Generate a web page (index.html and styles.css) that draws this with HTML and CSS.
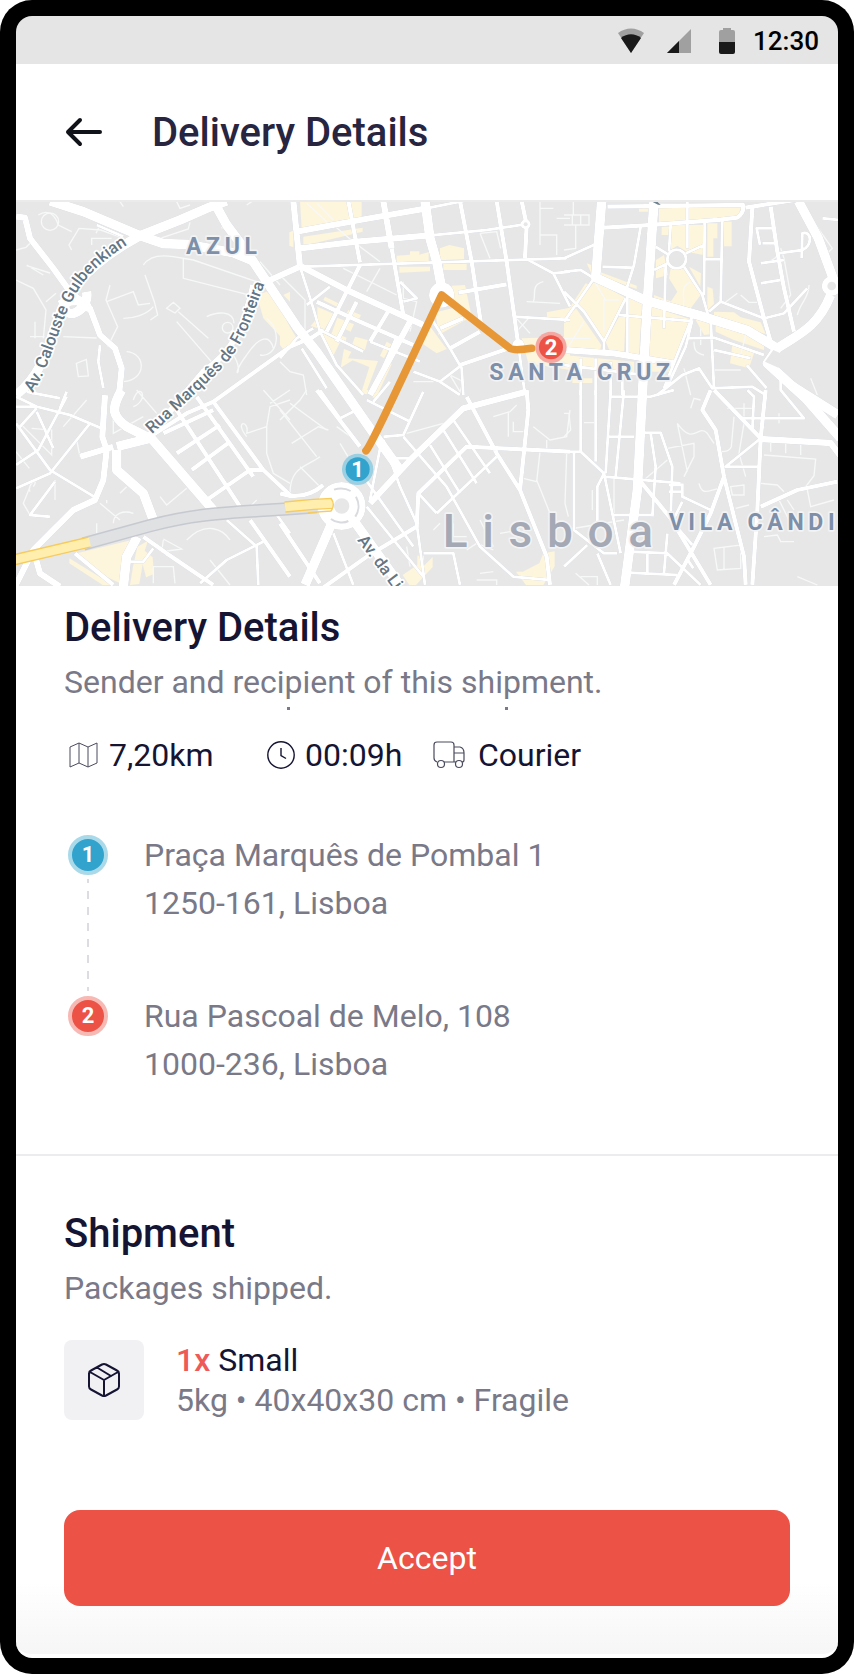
FILE: index.html
```html
<!DOCTYPE html>
<html lang="en">

<head>
  <meta charset="utf-8">
  <meta name="viewport" content="width=device-width">
  <title>Delivery Details</title>
  <link rel="stylesheet" href="styles.css">
</head>

<body>
  <div class="device">
    <div class="status">
      <svg class="wifi" viewBox="0 0 28 26">
        <path fill="#a0a0a0" d="M1 5C9-1 19-1 27 5L14 25z" />
        <path fill="#191919" d="M4 10C10 5 18 5 24 10L14 25z" />
      </svg>
      <svg class="signal" viewBox="0 0 24 24">
        <path fill="#a0a0a0" d="M24 0v24H0z" />
        <path fill="#191919" d="M12 12v12H0z" />
      </svg>
      <svg class="battery" viewBox="0 0 16 26">
        <path fill="#a0a0a0" d="M4 0h8v2h2q2 0 2 2v10H0V4q0-2 2-2h2z" />
        <path fill="#191919" d="M0 14h16v10q0 2-2 2H2q-2 0-2-2z" />
      </svg>
      <span>12:30</span>
    </div>

    <header>
      <button class="back" type="button" aria-label="Back">
        <svg viewBox="0 0 40 32" fill="none" stroke="#11131a" stroke-width="4" stroke-linecap="round" stroke-linejoin="round">
          <path d="M36 15H4M16 3L4 15l12 12" />
        </svg>
      </button>
      <h1>Delivery Details</h1>
    </header>

    <main>
      <svg class="map" viewBox="48 21 2466 1152" preserveAspectRatio="xMidYMid slice" role="img" aria-label="Route map">
        <rect class="land" x="0" y="0" width="2600" height="1200" />

        <!-- built-up areas -->
        <g class="area">
          <path d="M800 290l35 30 35 80v55l-80-85-20-70zM850 300l20-10v30z" />
          <g transform="translate(840 0)">
            <path d="M60 18h185v52L65 102zM70 125l178-27v12L70 152zM28 112l12-5v50l-12-5zM350 182l40-3v-10h28v10l28-8v28l-96 6zM358 215h92v14l-92 4zM480 160l28-10 44 10v32l-72 4zM490 207h70v18h-70zM515 272l40-2 20 95-100 55-8-68 50-12zM440 380l60 82-30 13-60-40z" />
            <path d="M112 335l50 22-30 48-40-12 20-25zM135 305l40 20-5 10-40-20zM172 368l50 20-10 22-22-10-10 20 20 8-5 14-42-22zM122 412l58 30-20 40zM205 345l38 15-10 20-38-15zM192 462l22 8-10 20 90 8-34 90-14-2 22-70-50-20-36 22zM225 425l38 10-8 30-38-18zM320 440l14 8-22 42-12-8zM315 500l20 8-36 78-20-4zM0 345l50 85-35 40-15-20zM800 352l70-14v37l-68-5zM725 430l145-5v100l-125-20z" />
          </g>
          <g transform="translate(1692 0)">
            <path d="M285 25h250l-15 45-150 10h-85zM293 95h22v25h-22zM320 90h100l-2 90-50-10-28-18-20 12zM430 85h30v45h-12v55h-18zM480 80h23v74h-23zM225 35h30v15h-30zM300 180l12 60-36 10v-55zM68 205l14 5v25zM110 232l108 40v10l-108-38zM65 265l16 6L10 376l-10-12zM92 258l92 50-64 132-80-110zM36 340l76 110-5 20L0 460v-75zM190 310h45l-10 170h-35zM165 365h20l-5 110h-40l-15-35zM265 335l120 40-86 130-54-10zM320 220h40l50 80-30 40-60-20 20-30-25-40zM375 215l36 20-2 40zM430 275l16 6 4 45-20 20zM270 300l80 30-5 15-75-20zM330 390l50-10-45 120-30 10zM395 375l45 5-2 38-18 2zM450 350l60 2 20 15 60 15 15 35-155-45zM455 385l145 50v30l-90-30-55-25zM505 450l55 10 10 15-15 45-57-15zM0 480l210 20v40L0 515zM25 550h60v14H25zM250 500h70v30h-70z" />
          </g>
          <g transform="translate(0 585)">
            <path d="M230 490l165-40-35 130-40-20zM412 470l32-18-10 30 24 20 4 50-24 10-10-40-10 60-28 3 10-60zM208 505l130 80h-30l-100-65z" />
          </g>
          <g transform="translate(840 585)">
            <path d="M245 0h20v12h-20zM285 0h14l-10 26-12-4zM368 555l44-30v-28h20v30l26-26v30l-50 54h-20zM708 545h20l50-25 12-30 34-6v45l-34 56h-52z" />
          </g>
        </g>

        <!-- footpaths -->
        <g class="path">
          <path d="M435 240l28 80 10 40-22 15M430 210c20-30 60-30 90-25l60 10 190 65M550 190v60l190 48M500 340l20-18 20 18-15 14zM535 350l90 80M530 380l130 150M480 130l85-28 5-20M330 270l-12 45 35 80-30 60M300 90l-12 25M215 165l-8-15 30-50 65 5 70 25M275 150v-20h60M48 165l30-8 20-20M80 212l70 22M48 255l52 25 38 65-8 85M90 425h44M105 380v50M130 240l-50-30M138 320l30-25M620 365c30-15 80-20 82 20M370 370c30 0 70-10 90-35M320 320l80-30 15 40 35-5M235 545l-6-40 30-12 6 50zM380 470c60 5 60 85-10 90M190 425l100 4M360 20l10 15M530 20l10 20 30-10M740 30l15-10M665 100l12-20M115 60c30-20 50 0 60 30l40 20M780 200l60 70M700 480c40 60-20 80 40 0 40-60 70-60 80-20M800 370c50 40 30 120-20 110" />
          <circle cx="683" cy="398" r="16" />
          <circle cx="150" cy="80" r="26" />
          <g transform="translate(840 0)">
            <path d="M80 25l65 60M110 25l50 50M160 90l60 50 80 60M190 220l160 80M300 220l-40 70M600 115l30 75M600 115l50-5 12 50M780 20v130M780 40h40M780 120h50v60M740 320l100 5M790 260c-40 10-20 40-30 60M5 245l70 70v90M0 500l30 30 40 10 10 60M830 70h40M705 365l45 50M750 365l-45 50M510 540l40 20-10 30zM370 260v50l40 10-20 90M400 560h60" />
          </g>
          <g transform="translate(1692 0)">
            <path d="M0 60h75v30H0M25 60v30M50 60v30M28 20v40M35 90v70L0 165M95 265l30 50h40M120 310v100M60 380L10 460M0 430h80M380 260c-40 20-10 50-25 80M520 295l-40 30M530 300l25 22h25M650 160l10 30 20 110-30 40M700 360c10-40 35-50 35-90M755 90l50 70-15 15M410 400v50M390 440c0 30 10 35 30 40M545 420l-15 60M450 525h80M740 550l20 50M360 520l20 80M650 170c-20 30-50 40-60 30" />
          </g>
          <g transform="translate(0 585)">
            <path d="M410 0l60 70M340 60v70l90-50M400 30c20-60 50 0 0 20M65 105l90 90v-75l-60-5M260 30l-70 80M48 185l40 50M90 290l-20 50 20 35M100 290c20-30-20-10-10 15M290 400v30M300 340l60 50M380 290l-20 20M480 320l20 25 60-50M340 400c0-30 30-40 60-30M490 450l-5 35 60-8-55-30M490 485l50 25M560 450c60-60 110-30 130 0M460 580v-50h60l5 50M630 510l60 75M740 140c-40-50 10-50 0-10l60-20 10-60 60-20M800 110v80l20 60 50 30M790 0l80 90M810 40l60-40M750 350l20-20M240 200l-10-50M320 340v-10M165 270v60" />
          </g>
          <g transform="translate(840 585)">
            <path d="M0 60l110 140M30 40l110 80M0 90l60-60 20-30M35 160l80-50 30 10M30 310c0-80 50-80 90-110M60 230l60 60M180 160l60 100M380 130l110-30M640 80l50-15 20-20M685 65v75M700 95v30h30M760 110l50 40 50-10 10-80M800 150v30M780 185l-10 90-40-10M770 270l40 100M860 190l-5 150 10 40M600 550l40-5M590 570h60v15M560 480l30-20 50 20M660 430l60-10M520 400v40h40M460 420l20-20M600 390l40 80M380 470l10 60M170 110l70 50" />
          </g>
          <g transform="translate(1692 585)">
            <path d="M0 70h15l5 50-20 20M60 98h35M150 260v110M85 300v60M310 175l80-15v40l-30 60M340 100l30 145M340 100c50 70 60 0 90 30l20 30M240 270l70-60M405 280c10 40 30 20 60 15M380 55l10-30 20 5M540 40v60l-15 90 20 70M510 80l-8 90q-5 15-30 15M490 55h80M645 70v30M620 155v30M665 160v30M710 165v30M600 195l155 12-5 50-30 40M590 280l50 5 20 20M500 290l40-5v30h-35zM515 355l40-10M450 475l80-10v70l-70 5zM480 470v70M600 440l40-5 10 20h40M670 330l20 30M730 300l10 50 70-20M640 320l40 80M700 560l60 25M50 560h50v25M35 550l40 35M0 420l180-30" />
          </g>
        </g>

        <!-- streets -->
        <g class="road">
          <g class="wide">
            <path d="M150 18l100 32 170 72 70 24 70 2 140 25 60 25" />
            <path d="M48 600C150 520 150 400 200 310 240 240 330 170 420 122l120-47 80-35 60-22" />
            <path d="M640 18l40 72 60 80 60 90 90 135 60 75 80 115 80 115 90 125" />
            <path d="M195 330C190 380 270 350 260 290M180 330c30-20 90-20 80 20" />
            <path d="M1275 18l15 112 20 70 15 80M1805 18l-18 230 150 68 160 45 145 45 100 60M1962 20l-20 300-15 280-15 285-38 290M2372 570l142 90" />
            <path d="M2395 18l60 112 48 130M2492 300c-40 100-100 120-160 160l-30 45 115 105 105 120" />
            <path d="M452 728l190 220M365 585c-35 60-25 80 15 110l70 35-100 25M350 765v60l80 70 30 80" />
            <path d="M995 985l-80 185M1060 975l140 195M412 1025l-32 60-10 90" />
          </g>
          <g class="main">
            <path d="M48 65l27 3 15 62 70 90 50 70 60 50 30 80 45 40 20 60-8 80" />
            <path d="M760 270c-30 130-60 200-150 260l-160 190M800 260l100-45M890 110l190-35 200-35M900 160l170-20 210-18M880 18l20 197M1150 18l25 142" />
            <path d="M905 215l135 70 120 55 110 50M1230 380l-120 220M1692 465l150 10 180 30" />
            <path d="M340 755l-100 30M315 600l-8 125 13 40-10 90-25 60-65 30-70 70-50 50-55 110M100 1065l20 70 60 40" />
            <path d="M1110 925l130-140 150-145 190-50M2280 732l212 12 30 40" />
          </g>
          <g class="mid">
            <path d="M450 725l110-70 80-35 230-165 70-30 30-20M225 1075l115 95M530 645l190 290M590 605l170 240M640 620l150 205 80 75M620 915l130-90h40" />
            <path d="M1045 18l35 185M1175 160l35 200M1380 18l35 182 30 200M1490 18l30 182 35 250M1565 18l15 72-5 100M1080 210l-100 200M1375 293l145-25M1320 400l70-30M1350 460l90-50M1380 510l175-60M1190 430l-70 160M950 320l130 60 160 70M1170 340l-60 100M1070 320l-60 120" />
            <path d="M1822 35l410-5M1812 98l110-6 230-17 60-7q25-20 15-43M2237 38l145-23M2257 40l-10 160 45 170 20 70M2312 35l20 135 20 110 30 130" />
            <path d="M490 715l150-70M530 775l130-85M575 825l115-85M430 1025l70 50 140 95M750 975l120 170M840 895c60 20 100 0 130-25M840 985l120 180" />
            <path d="M960 1185l140-100 150-90 5-100 145-140 310 15M1400 605l90 170 70 110 80 200 10 85M1580 585l5 60-25 240M950 585l130 170" />
            <path d="M1922 860l90 110 120 200M2132 585l-25 60 40 60 25 140 60 240 5 85M2172 845l-40 110-50 100-60 115M2142 585l140 145M2297 585l-15 145-10 215-15 225M2282 935l110-50 120-25" />
          </g>
          <g class="small">
            <path d="M48 605l62 30 100 25 95 40M110 640l-50 55M48 685l102 140 140 85M200 605l-85 160-67 45M270 685l-120 150-102 45M165 860l-75 100 60 5M110 650l50 110M48 635h60M680 975l90 80 5 115M600 1165l80-70 110-55M390 1100h40l30-40M820 945l50 70M300 450l-5 50 15 80M290 90l80 35M80 590l100 20M180 640l20-50" />
            <path d="M900 215l800-25M1280 40l150-30M1280 122l180-17 115-17M900 215l40 125 20 70 50 100 80 90M960 405l130 65M1300 380l50 80 35 60 5 80M1555 450l20 150M1240 530l80 30 65-50M1320 560l60 40M1545 365l165 10M1585 195l75 40 50-5M1200 260l50 50-40 10M920 330l70-55M1660 235l50 100M840 490l50-60 50-30M905 460l75 120M1110 440l150 60" />
            <path d="M2167 75l-5 245M2114 80l-2 220M2062 18v142M2012 90l-5 80M1967 155l40 25M1962 225l40-20M2057 175l55-25M2052 215l55 85 20 70M1997 210l-5 190M1922 95l-20 115-25 80M1807 215l95 3M1692 190l100-45M1692 230l50-5 40 25-90 130M1692 290l60 60 60 90v30M1877 310l-65 130M1857 360l215 18M2077 365l-85 215M2132 370l10 210M2127 350l35-30 130 50 60-15 70-75M2062 430l80-2 150 52M2142 465l110 25M2337 175l70-10c30-10 30-60 0-50l-2 75M2282 205l70-10M2282 265l60-10M1882 300v180M2117 193h50M2077 375l-20 80-55 120M1972 600l75-60 50-20 40 60 120-5 40 25M1692 510l240 30M1742 490v110M1787 490v110M1832 500v100M1867 500v100M2287 145h40M2290 100h30M2280 150l-10-50h30M2240 510l60 70M2467 70l50 5" />
            <circle cx="2030" cy="192" r="28" />
            <path d="M1150 725l60-5 60-130M1100 615l130 65M1210 725l130 150 100 180 100 90 110 10M1150 735l50 140 50 110 25 185M1330 705l100 160M1360 675l110 160M1290 750l90 145M1100 935l170 210M1000 1015l60 155M1310 955l180-170M1255 895l55 60M1145 735l-35 180M1270 1075h90l20 95M1180 790l60 0M1080 830l160 225M960 585l60 85 40-20M1120 620l50-60" />
            <path d="M1832 585l-15 250M1872 585l-25 260M1742 585v185M1787 585v215M1692 770h50l70 65-20 40v120M1812 835l50 240M1817 845l225 20M1832 605h120l70-20M1827 725h75M1927 713h55l35 102-5 150M1952 715l15 100-10 150M2047 865v40l85 40M2007 870h40v20h-40M2282 730l-105 85h105M2222 670h190l-70-85v-30M2242 585l20 20-5 100M1892 1070l110 5 100 95M1892 1133l140 7M1792 1075l40 95M1722 775v230l90 70h40M1692 1115l70-65M2002 1015l-10 120M1942 1070v63M1840 960h120M2047 920l-30 60 60 70M2060 1090l20 30" />
          </g>
          <circle class="disc" cx="1325" cy="300" r="38" />
          <circle class="disc" cx="1555" cy="450" r="18" />
          <circle class="disc" cx="1577" cy="88" r="15" />
          <circle class="disc" cx="2495" cy="273" r="30" />
          <circle class="disc" cx="1025" cy="933" r="72" />
        </g>
        <g class="land">
          <circle cx="1577" cy="88" r="6" />
          <circle cx="2495" cy="273" r="13" />
          <circle cx="1025" cy="933" r="23" />
          <path d="M2295 500l25-35 40 18-25 35z" />
        </g>
        <path fill="none" stroke="#d9dbde" stroke-width="6" d="M1002 884c14-5 34-5 50 4M1068 905c12 22 8 45-2 60M1045 978c-15 8-40 4-52-6" />
        <path fill="#6f8290" d="M1956 20h16l10 10-8-1z" />

        <!-- motorway -->
        <g fill="none">
          <path stroke="#c6c9d0" stroke-width="40" d="M250 1047l200-55c170-45 260-37 500-57" />
          <path stroke="#dfe1e2" stroke-width="31" d="M250 1047l200-55c170-45 260-37 500-57" />
          <path stroke="#f7cb5c" stroke-width="34" d="M40 1095l228-54M855 936l85-8 56-3" />
          <path stroke="#ffeead" stroke-width="26" d="M40 1095l230-54M855 936l85-8 60-3" />
          <path stroke="#f7cb5c" stroke-width="4" d="M925 953l68-5q14-20 0-37" />
        </g>

        <g class="names">
          <text class="district" x="558" y="177">AZUL</text>
          <text class="district" x="1468" y="554">SANTA CRUZ</text>
          <text class="district" x="2006" y="1006">VILA CÂNDI</text>
          <text class="city" x="1328" y="1055">Lisboa</text>
          <path id="calouste" fill="none" d="M98 594C150 520 172 400 218 315 250 250 300 200 400 138" />
          <path id="marques" fill="none" d="M456 718L640 545C730 460 745 400 792 270" />
          <path id="liberdade" fill="none" d="M1071 1036l150 200" />
          <text class="street"><textPath href="#calouste">Av. Calouste Gulbenkian</textPath></text>
          <text class="street"><textPath href="#marques">Rua Marquês de Fronteira</textPath></text>
          <text class="street"><textPath href="#liberdade">Av. da Li</textPath></text>
        </g>

        <path class="route" d="M1098 767q12-12 92-182l135-285 205 160q12 8 65 0" />
        <g class="pin">
          <circle class="halo-a" cx="1073" cy="823" r="47" />
          <circle class="dot-a" cx="1073" cy="823" r="36" />
          <text x="1073" y="847">1</text>
          <circle class="halo-b" cx="1653" cy="457" r="47" />
          <circle class="dot-b" cx="1653" cy="457" r="36" />
          <text x="1653" y="481">2</text>
        </g>
      </svg>

      <section class="details">
        <h2>Delivery Details</h2>
        <p class="sub marks">Sender and recipient of this shipment.</p>
        <ul class="stats">
          <li>
            <svg viewBox="0 0 32 32" fill="none" stroke="#4a4a5e" stroke-width="1">
              <path d="M2 8l9-4 9 4 9-4v20l-9 4-9-4-9 4zM11 4v20M20 8v20" />
            </svg>
            7,20km
          </li>
          <li>
            <svg viewBox="0 0 32 32" fill="none" stroke="#151433" stroke-width="1.4">
              <circle cx="17" cy="16" r="13.2" />
              <path d="M17 9v7.500l5 3" />
            </svg>
            00:09h
          </li>
          <li>
            <svg class="truck" viewBox="0 0 36 32" fill="none" stroke="#4a4a5e" stroke-width="1.200">
              <path d="M4 23Q1 22 1 19V6q0-3 3-3h14q3 0 3 3v17H11M21 8h6q4 1 4 6v7q0 2-2 2M21 14h10M21 23h2" />
              <circle cx="8" cy="25" r="3.500" />
              <circle cx="26" cy="25" r="3.500" />
            </svg>
            Courier
          </li>
        </ul>
        <ol class="stops">
          <li>
            <span class="num blue">1</span>
            <address>Praça Marquês de Pombal 1<br>1250-161, Lisboa</address>
          </li>
          <li>
            <span class="num red">2</span>
            <address>Rua Pascoal de Melo, 108<br>1000-236, Lisboa</address>
          </li>
        </ol>
      </section>

      <section class="shipment">
        <h2>Shipment</h2>
        <p class="sub">Packages shipped.</p>
        <div class="package">
          <div class="thumb">
            <svg viewBox="0 0 32 36" fill="none" stroke="#151433" stroke-width="2" stroke-linecap="round" stroke-linejoin="round">
              <path d="M14 2.500q2-1 4 0L29 8.500q2 1 2 3v13q0 2-2 3L18 33.500q-2 1-4 0L3 27.500q-2-1-2-3v-13q0-2 2-3zM2 10l14 8 14-8M16 18v16M9 5.500l14 8.500" />
            </svg>
          </div>
          <div class="info">
            <p class="name"><b>1x</b> Small</p>
            <p>5kg • 40x40x30 cm • Fragile</p>
          </div>
        </div>
      </section>
    </main>

    <footer>
      <button class="accept" type="button">Accept</button>
    </footer>
  </div>
</body>

</html>
```

FILE: styles.css
```css
* {
  box-sizing: border-box;
}

body {
  margin: 0;
  background: #fff;
  font-family: Roboto, "Liberation Sans", sans-serif;
  font-size: 32px;
  color: #151433;
}

h1,
h2,
p,
ul,
ol {
  margin: 0;
  padding: 0;
}

ul,
ol {
  list-style: none;
}

svg {
  display: block;
  flex: none;
}

button {
  border: 0;
  padding: 0;
  font: inherit;
  cursor: pointer;
}

.device {
  display: flex;
  flex-direction: column;
  min-height: 100vh;
  padding: 16px;
  background: #000;
  border-radius: 32px;
}

/* status bar */
.status {
  display: flex;
  align-items: center;
  justify-content: flex-end;
  height: 48px;
  padding: 2px 19px 0 0;
  background: #e5e5e5;
  border-radius: 16px 16px 0 0;
  color: #000;
  font-size: 26px;
  font-weight: 500;
}

.wifi {
  width: 28px;
  height: 26px;
  margin-right: 22px;
}

.signal {
  width: 24px;
  height: 24px;
  margin-right: 28px;
}

.battery {
  width: 16px;
  height: 26px;
  margin-right: 18px;
}

/* title bar */
header {
  display: flex;
  align-items: center;
  gap: 48px;
  height: 138px;
  padding: 2px 48px 0;
  background: #fff;
  border-bottom: 2px solid #ebebeb;
}

.back {
  background: none;
}

.back svg {
  width: 40px;
  height: 32px;
}

h1,
h2 {
  font-size: 40px;
  font-weight: 500;
  line-height: 48px;
}

h1 {
  color: #27253f;
}

main {
  flex: 1;
  background: #fff;
}

/* map */
.map {
  width: 100%;
  height: 384px;
}

.land {
  fill: #e7e7e7;
}

.area {
  fill: #fdf5dc;
}

.path {
  fill: none;
  stroke: #f7f8f8;
  stroke-width: 4;
}

.road {
  fill: none;
  stroke: #fff;
  stroke-linejoin: round;
  filter: drop-shadow(0 0 1px #b9bec9);
}

.wide {
  stroke-width: 29;
}

.main {
  stroke-width: 19;
}

.mid {
  stroke-width: 13;
}

.small {
  stroke-width: 9;
}

.disc {
  fill: #fff;
  stroke: none;
}

.names text {
  stroke: #f2f3f4;
  stroke-width: 10;
  stroke-linejoin: round;
  paint-order: stroke;
}

.names .district {
  fill: #7d8fa9;
  font-size: 69px;
  font-weight: 700;
  letter-spacing: 14px;
}

.names .city {
  fill: #a4a9b5;
  font-size: 138px;
  font-weight: 500;
  letter-spacing: 44px;
}

.names .street {
  fill: #647583;
  stroke: #fff;
  font-size: 50px;
  font-weight: 500;
}

.route {
  fill: none;
  stroke: #e79735;
  stroke-width: 23;
  stroke-linecap: round;
  stroke-linejoin: round;
}

.pin text {
  fill: #fff;
  font-size: 66px;
  font-weight: 700;
  text-anchor: middle;
}

.halo-a {
  fill: #9bcfe2;
}

.dot-a {
  fill: #31a3cd;
}

.halo-b {
  fill: #f4a8a1;
}

.dot-b {
  fill: #ec5245;
}

/* details */
.details {
  padding: 18px 48px 66px;
}

.sub {
  margin-top: 6px;
  line-height: 48px;
  color: #7a7988;
}

.marks {
  position: relative;
}

.marks::before,
.marks::after {
  content: '';
  position: absolute;
  top: 49px;
  left: 223px;
  width: 3px;
  height: 3px;
  background: #7a7988;
}

.marks::after {
  left: 441px;
}

.stats {
  display: grid;
  grid-template-columns: 196px 169px auto;
  margin-top: 29px;
  padding-left: 4px;
  line-height: 40px;
}

.stats li {
  display: flex;
  align-items: center;
  gap: 9px;
}

.stats svg {
  width: 32px;
  height: 32px;
}

.stats .truck {
  width: 36px;
}

.stops {
  display: grid;
  gap: 65px;
  margin-top: 56px;
}

.stops li {
  display: flex;
  gap: 36px;
  position: relative;
  padding-left: 4px;
}

.stops li:first-child::after {
  content: '';
  position: absolute;
  left: 23px;
  top: 48px;
  width: 2px;
  height: 112px;
  background: repeating-linear-gradient(#dcdce2 0 4px, transparent 4px 12px, #dcdce2 12px 16px);
}

.num {
  flex: none;
  width: 40px;
  height: 40px;
  margin-top: 4px;
  border-radius: 50%;
  color: #fff;
  font-size: 22px;
  font-weight: 700;
  line-height: 32px;
  text-align: center;
}

.blue {
  background: #31a3cd;
  border: 4px solid #aadaea;
}

.red {
  background: #ec5245;
  border: 4px solid #f7b9b4;
}

address {
  font-style: normal;
  line-height: 48px;
  color: #7a7988;
}

/* shipment */
.shipment {
  padding: 54px 48px 90px;
  border-top: 2px solid #ececee;
}

.package {
  display: flex;
  gap: 32px;
  margin-top: 28px;
}

.thumb {
  display: flex;
  flex: none;
  align-items: center;
  justify-content: center;
  width: 80px;
  height: 80px;
  background: #f1f1f4;
  border-radius: 8px;
}

.thumb svg {
  width: 32px;
  height: 36px;
}

.info {
  line-height: 40px;
  color: #7a7988;
}

.name {
  color: #151433;
}

.name b {
  color: #ee5a58;
  font-weight: 500;
}

footer {
  padding: 0 48px 48px;
  background: linear-gradient(#fff 50%, #f6f6f6);
  border-bottom: 4px solid #fff;
  border-radius: 0 0 16px 16px;
}

.accept {
  display: block;
  width: 100%;
  height: 96px;
  background: #ec5245;
  border-radius: 16px;
  color: #fff;
}
```
